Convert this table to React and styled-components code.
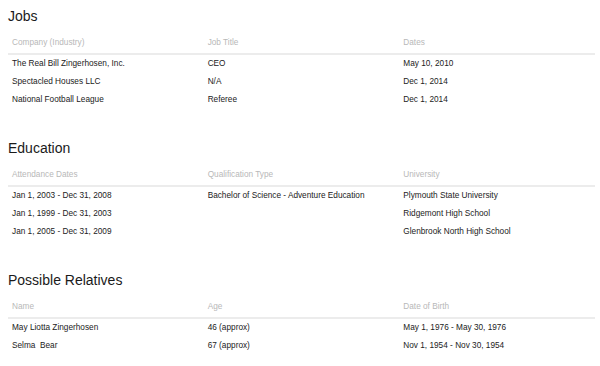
import React from "react";
import styled, { createGlobalStyle } from "styled-components";

const sections = [
  {
    title: "Jobs",
    columns: ["Company (Industry)", "Job Title", "Dates"],
    rows: [
      ["The Real Bill Zingerhosen, Inc.", "CEO", "May 10, 2010"],
      ["Spectacled Houses LLC", "N/A", "Dec 1, 2014"],
      ["National Football League", "Referee", "Dec 1, 2014"],
    ],
  },
  {
    title: "Education",
    columns: ["Attendance Dates", "Qualification Type", "University"],
    rows: [
      [
        "Jan 1, 2003 - Dec 31, 2008",
        "Bachelor of Science - Adventure Education",
        "Plymouth State University",
      ],
      ["Jan 1, 1999 - Dec 31, 2003", "", "Ridgemont High School"],
      ["Jan 1, 2005 - Dec 31, 2009", "", "Glenbrook North High School"],
    ],
  },
  {
    title: "Possible Relatives",
    columns: ["Name", "Age", "Date of Birth"],
    rows: [
      ["May Liotta Zingerhosen", "46 (approx)", "May 1, 1976 - May 30, 1976"],
      ["Selma\u00a0 Bear", "67 (approx)", "Nov 1, 1954 - Nov 30, 1954"],
    ],
  },
];

const App = () => (
  <>
    <GlobalStyle />
    <Page>
      {sections.map((section) => (
        <Section key={section.title}>
          <Title>{section.title}</Title>
          <Table>
            <thead>
              <tr>
                {section.columns.map((col) => (
                  <HeadCell key={col}>{col}</HeadCell>
                ))}
              </tr>
            </thead>
            <tbody>
              {section.rows.map((row, i) => (
                <tr key={i}>
                  {row.map((cell, j) => (
                    <Cell key={j}>{cell}</Cell>
                  ))}
                </tr>
              ))}
            </tbody>
          </Table>
        </Section>
      ))}
    </Page>
  </>
);

const GlobalStyle = createGlobalStyle`
  body {
    margin: 0;
    background: #ffffff;
    font-family: "Liberation Sans", Arial, sans-serif;
  }
`;

const Page = styled.div`
  padding: 8px 5px 0 8px;
  display: flex;
  flex-direction: column;
  gap: 31px;
`;

const Section = styled.section`
  display: flex;
  flex-direction: column;
`;

const Title = styled.h2`
  margin: 0 0 9px;
  font-size: 14px;
  line-height: 16px;
  font-weight: normal;
  color: #1a1a1a;
`;

const Table = styled.table`
  width: 100%;
  border-collapse: separate;
  border-spacing: 0;
  table-layout: fixed;
`;

const HeadCell = styled.th`
  padding: 5px 4px;
  line-height: 10px;
  text-align: left;
  font-weight: normal;
  font-size: 8.25px;
  color: #b8b8b8;
  border-bottom: 2px solid #ececec;
`;

const Cell = styled.td`
  padding: 0 4px;
  line-height: 18px;
  font-size: 8.25px;
  color: #222222;
  white-space: nowrap;
`;

export default App;
